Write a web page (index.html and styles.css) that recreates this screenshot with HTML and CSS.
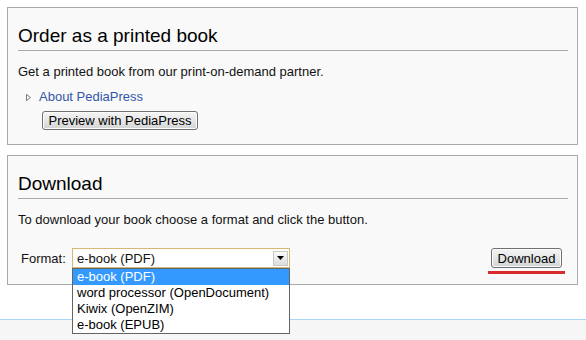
FILE: index.html
```html
<!DOCTYPE html>
<html>
<head>
<meta charset="utf-8">
<link rel="stylesheet" href="styles.css">
</head>
<body>
<div class="page">
  <div class="box box-order">
    <h2 class="title">Order as a printed book</h2>
    <p class="text">Get a printed book from our print-on-demand partner.</p>
    <div class="about">
      <svg class="tri" width="5" height="7" viewBox="0 0 5 7"><path d="M0.5 0.5 L4.5 3.5 L0.5 6.5 Z" fill="#fff" stroke="#777" stroke-width="1"/></svg>
      <a class="link" href="#">About PediaPress</a>
    </div>
    <button class="btn btn-preview">Preview with PediaPress</button>
  </div>
  <div class="box box-download">
    <h2 class="title">Download</h2>
    <p class="text">To download your book choose a format and click the button.</p>
    <div class="format-row">
      <span class="label">Format:</span>
      <div class="select">
        <span class="select-value">e-book (PDF)</span>
        <span class="select-arrow"><svg width="7" height="4" viewBox="0 0 7 4"><path d="M0 0 H7 L3.5 4 Z" fill="#000"/></svg></span>
        <ul class="options">
          <li class="opt opt-sel">e-book (PDF)</li>
          <li class="opt">word processor (OpenDocument)</li>
          <li class="opt">Kiwix (OpenZIM)</li>
          <li class="opt">e-book (EPUB)</li>
        </ul>
      </div>
      <span class="spacer"></span>
      <button class="btn btn-download">Download</button>
    </div>
  </div>
</div>
<div class="footer"></div>
</body>
</html>
```
FILE: styles.css
```css
html, body {
  margin: 0;
  padding: 0;
  background: #fff;
  font-family: "Liberation Sans", Arial, sans-serif;
  color: #111;
  overflow: hidden;
}
.page {
  padding: 7px 8px 0 7px;
}
.box {
  border: 1px solid #aaa;
  background: #f9f9f9;
  padding: 16px 9px 0 10px;
}
.box-order {
  padding-bottom: 14px;
}
.box-download {
  margin-top: 10px;
  padding-bottom: 16px;
}
.title {
  margin: 0;
  font-size: 19px;
  font-weight: normal;
  line-height: 24px;
  padding-bottom: 2px;
  border-bottom: 1px solid #aaa;
  color: #000;
}
.text {
  margin: 12px 0 0 0;
  font-size: 13px;
  line-height: 18px;
}
.about {
  margin-top: 7px;
  display: flex;
  align-items: center;
  font-size: 13px;
  line-height: 18px;
  padding-left: 8px;
}
.tri {
  margin-right: 8px;
}
.link {
  color: #3355aa;
  text-decoration: none;
}
.btn {
  font-family: "Liberation Sans", Arial, sans-serif;
  font-size: 13px;
  color: #000;
  height: 19px;
  padding: 0;
  white-space: nowrap;
  border: 1px solid #707070;
  border-radius: 3px;
  background: linear-gradient(#f4f4f4, #e6e6e6 50%, #d4d4d4);
  line-height: 17px;
  box-shadow: inset 0 0 0 1px #fcfcfc;
}
.btn-preview {
  display: block;
  margin: 5px 0 0 24px;
  width: 156px;
}
.format-row {
  display: flex;
  align-items: center;
  margin-top: 19px;
  height: 20px;
  padding-right: 6px;
}
.label {
  font-size: 13px;
  margin-left: 3px;
  width: 51px;
}
.select {
  position: relative;
  width: 216px;
  height: 18px;
  border: 1px solid #d6b676;
  background: #fff;
  display: flex;
  align-items: center;
}
.select-value {
  flex: 1;
  font-size: 13px;
  padding-left: 4px;
}
.select-arrow {
  width: 15px;
  height: 15px;
  margin-right: 1px;
  border: 1px solid #c8c8c8;
  box-sizing: border-box;
  background: linear-gradient(#fafafa, #dcdcdc);
  display: flex;
  align-items: center;
  justify-content: center;
}
.options {
  position: absolute;
  left: -1px;
  top: 19px;
  width: 216px;
  margin: 0;
  padding: 0;
  list-style: none;
  border: 1px solid #646464;
  background: #fff;
  z-index: 2;
}
.opt {
  font-size: 13px;
  line-height: 16px;
  height: 16px;
  padding-left: 4px;
  color: #000;
}
.opt-sel {
  background: #3399ff;
  color: #fff;
}
.spacer {
  flex: 1;
}
.btn-download {
  position: relative;
  width: 71px;
  height: 20px;
}
.btn-download::after {
  content: "";
  position: absolute;
  left: -4px;
  right: -4px;
  top: 22px;
  height: 3px;
  background: #d92a2e;
}
.footer {
  margin-top: 34px;
  border-top: 1px solid #a7d7f9;
  background: #f6f6f6;
  height: 20px;
}
```
